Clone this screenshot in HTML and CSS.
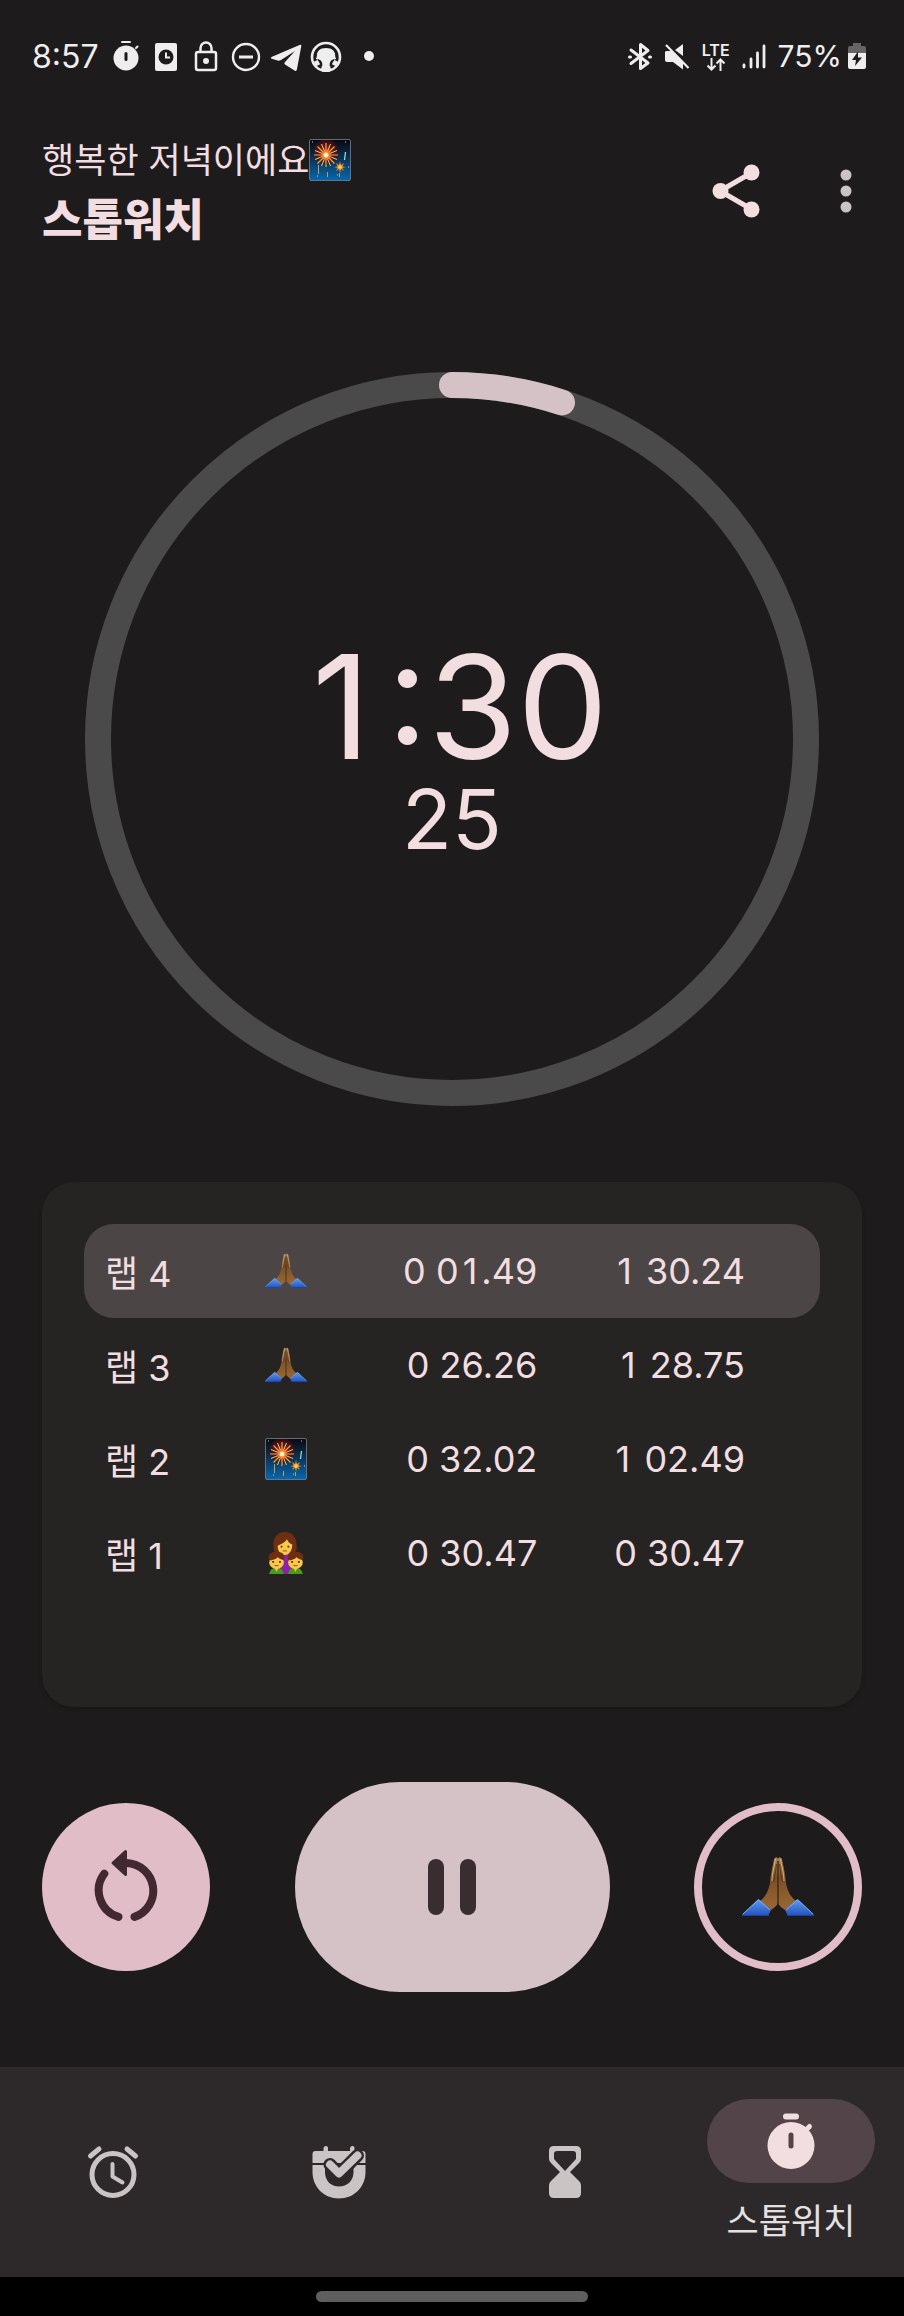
FILE: index.html
```html
<!DOCTYPE html>
<html lang="ko">
<head>
    <meta charset="UTF-8">
    <meta name="viewport" content="width=device-width, initial-scale=1.0">
    <title>스톱워치</title>
    <link rel="stylesheet" href="styles.css">
</head>
<body>
    <!-- shared drawings -->
    <svg class="sprite" aria-hidden="true">
        <defs>
            <linearGradient id="skin" x1="0" y1="0" x2="0" y2="1">
                <stop offset="0" stop-color="#a9835a"/>
                <stop offset="0.4" stop-color="#7b4f26"/>
                <stop offset="1" stop-color="#9a6837"/>
            </linearGradient>
            <linearGradient id="sleeve" x1="0" y1="0" x2="0" y2="1">
                <stop offset="0" stop-color="#5a9cf5"/>
                <stop offset="1" stop-color="#2450b8"/>
            </linearGradient>
            <linearGradient id="night" x1="0" y1="0" x2="0" y2="1">
                <stop offset="0" stop-color="#07080f"/>
                <stop offset="0.4" stop-color="#0d2c4c"/>
                <stop offset="1" stop-color="#0668b0"/>
            </linearGradient>
            <radialGradient id="glow">
                <stop offset="0" stop-color="#e2371c"/>
                <stop offset="0.5" stop-color="#7a1518" stop-opacity="0.8"/>
                <stop offset="1" stop-color="#4a0c14" stop-opacity="0.4"/>
            </radialGradient>
        </defs>

        <symbol id="pray" viewBox="0 0 72 60">
            <path fill="url(#skin)" d="M36 2C35 0 34 0 33 1C32 1 32 3 31.500 5C29.500 14 28.500 19 28 26C26 35 24 39 18 44L29 53C33 50 36 48 36 45Z"/>
            <path fill="url(#skin)" d="M36 2C37 0 38 0 39 1C40 1 40 3 40.500 5C42.500 14 43.500 19 44 26C46 35 48 39 54 44L43 53C39 50 36 48 36 45Z"/>
            <path d="M36 4V47" stroke="#33200f" stroke-width="1.200"/>
            <path d="M33.500 2C32 11 30 17 30 24M38.500 2C40 11 42 17 42 24" fill="none" stroke="#d9b98c" stroke-width="0.900"/>
            <path d="M34.500 7C33.500 15 33 19 31.500 25M37.500 7C38.500 15 39 19 40.500 25" fill="none" stroke="#4b2d12" stroke-width="0.800"/>
            <path fill="url(#sleeve)" d="M0 57.500L15.500 43Q16.500 42 17.500 43L29 53L26 59H0ZM72 57.500L56.500 43Q55.500 42 54.500 43L43 53L46 59H72Z"/>
            <path d="M0 58.500H27M45 58.500H72" stroke="#1c3f97" stroke-width="1.200"/>
            <path d="M1 57L16.500 42.500L28 53M71 57L55.500 42.500L44 53" fill="none" stroke="#8dbcff" stroke-width="0.800"/>
        </symbol>

        <symbol id="firework" viewBox="0 0 42 42">
            <rect x="0.500" y="0.500" width="41" height="41" rx="1.500" fill="url(#night)"/>
            <circle cx="17" cy="13" r="13" fill="url(#glow)"/>
            <g fill="none" stroke="#f3a52c" stroke-width="1.200">
                <path d="M17 4V28M5 16H29M8.500 7.500L25.500 24.500M25.500 7.500L8.500 24.500"/>
            </g>
            <g fill="none" stroke="#ffe06a" stroke-width="0.900">
                <path d="M12.500 5L21.500 27M21.500 5L12.500 27M6 11.500L28 20.500M6 20.500L28 11.500"/>
            </g>
            <circle cx="17" cy="16" r="4.500" fill="#ff7a2a"/>
            <circle cx="17" cy="16" r="2.500" fill="#fff4c8"/>
            <path d="M31 22L32 26L35 24L33.500 27.500L37 28L33.500 29L35 32L32 30L31 34L30 30L27 32L28.500 29L25 28L28.500 27.500L27 24L30 26Z" fill="#e68a1c"/>
            <circle cx="31" cy="28" r="1.800" fill="#ffd257"/>
            <path d="M35.500 21L36.500 13" stroke="#8fe6cf" stroke-width="1.300"/>
            <path d="M9.500 26V35M18.500 33V38M30.500 34V38" stroke="#c79a4c" stroke-width="1"/>
            <path d="M3 3h1M36 3h1M39 28h1M8 37h1M28 36h1" stroke="#b8d6e6" stroke-width="1"/>
            <rect x="0.500" y="0.500" width="41" height="41" rx="1.500" fill="none" stroke="#76828c" stroke-opacity="0.800"/>
        </symbol>

        <symbol id="family" viewBox="0 0 34 40">
            <path d="M16 0C8 0 5 6 5 13C5 18 7 21 10 22H23C26 21 28 17 27 12C27 5 23 0 16 0Z" fill="#6e2e10"/>
            <path d="M11 20H22L25 40H9Z" fill="#8c22a8"/>
            <path d="M9 13C12 12 16 10 18 7C19 10 21 11 23 12C23 18 20 22 16 22C12 22 9 18 9 13Z" fill="#f7c94b"/>
            <g id="child">
                <path d="M1 40Q2 34 8 34Q14 34 15 40Z" fill="#4a9a1e"/>
                <path d="M5.500 33H10.500L8 38Z" fill="#f0bd3e"/>
                <ellipse cx="8" cy="24" rx="7.500" ry="5.500" fill="#6e2e10"/>
                <ellipse cx="8" cy="29" rx="7" ry="6" fill="#f7c94b"/>
                <path d="M1 27Q2 21 8 22Q14 21 15 27Q11 26 9 24Q6 27 1 27Z" fill="#6e2e10"/>
                <path d="M4 28.500h1.600M10.400 28.500h1.600" stroke="#452308" stroke-width="1.600"/>
                <path d="M6 32h4" stroke="#b3541c" stroke-width="1"/>
            </g>
            <use href="#child" x="18"/>
            <path d="M12 14h1.500M18.500 14h1.500" stroke="#452308" stroke-width="1.600"/>
            <path d="M14 18h4" stroke="#b3541c" stroke-width="1"/>
        </symbol>
    </svg>

    <div class="status-bar">
        <span class="clock">8:57</span>
        <div class="status-icons">
            <svg viewBox="0 0 32 32">
                <path d="M12 2h8M26 8l1.500-1.500" stroke="#eee" stroke-width="2" stroke-linecap="round"/>
                <circle cx="16" cy="18" r="12.500" fill="#eee"/>
                <path d="M16 13.500v6" stroke="#1e1b1c" stroke-width="3" stroke-linecap="round"/>
            </svg>
            <svg viewBox="0 0 32 32">
                <rect x="5" y="3" width="22" height="28" rx="2" fill="#eee"/>
                <circle cx="16" cy="17" r="7.500" fill="#1e1b1c"/>
                <path d="M16 12.500v5h4" fill="none" stroke="#eee" stroke-width="2"/>
            </svg>
            <svg viewBox="0 0 32 32" fill="none" stroke="#eee" stroke-width="2.500">
                <rect x="6" y="12" width="20" height="18" rx="2"/>
                <path d="M10.500 12V8a5.500 5.500 0 0 1 11 0v4"/>
                <circle cx="16" cy="21" r="3" fill="#eee" stroke="none"/>
            </svg>
            <svg viewBox="0 0 32 32" fill="none" stroke="#eee" stroke-width="2.400">
                <circle cx="16" cy="17" r="13"/>
                <path d="M9 17h14" stroke-width="3"/>
            </svg>
            <svg viewBox="0 0 32 32">
                <path d="M1 18.500Q0 18 2 16.800L29.500 5Q31.500 4 31.300 6L27 29Q26.500 32 24.500 30.500L15 24.500Q13.500 23.500 15 22L25 11L11 20Q9 21 7.500 20.500Z" fill="#eee"/>
            </svg>
            <svg viewBox="0 0 32 32">
                <circle cx="16" cy="17" r="14" fill="none" stroke="#eee" stroke-width="2.600"/>
                <path d="M6 19Q5 8 16 8T26 19Q20 20 20 25Q20 28 22 30Q16 32.500 10 30Q12 28 12 25Q12 20 6 19Z" fill="#eee"/>
                <path d="M5 24L9 22M27 24L23 22" stroke="#eee" stroke-width="5"/>
                <path d="M6 18Q6 7 16 7T26 18" fill="none" stroke="#1e1b1c" stroke-width="1"/>
                <path d="M8 20Q12 21 11.500 26M24 20Q20 21 20.500 26" fill="none" stroke="#1e1b1c" stroke-width="1.600"/>
            </svg>
            <span class="more-dot"></span>
        </div>
        <div class="system-icons">
            <svg width="24" height="32" viewBox="0 0 24 32" fill="none" stroke="#eee" stroke-width="3" stroke-linejoin="round" stroke-linecap="round">
                <path d="M3 10L20 23L12.500 28.500V4.500L20 10.500L3 23.500"/>
                <path d="M1.500 17h1M21.500 17h1"/>
            </svg>
            <svg width="26" height="32" viewBox="0 0 26 32" fill="#eee">
                <path d="M1 12Q1 11 3 11H8L19 22V29.500L9 22H3Q1 22 1 20ZM11 10L19 4V16Z"/>
                <path d="M2 5L24.500 28" stroke="#eee" stroke-width="2.200"/>
            </svg>
            <div class="network">
                <span>LTE</span>
                <svg width="20" height="13" viewBox="0 0 20 13" fill="none" stroke="#eee" stroke-width="2">
                    <path d="M5.500 0v11M1.500 7.500l4 4l4-4M14.500 13V2M10.500 5.500l4-4l4 4"/>
                </svg>
            </div>
            <svg width="24" height="32" viewBox="0 0 24 32" stroke="#eee" stroke-width="2.800" stroke-linecap="round">
                <path d="M2 25v2M9 19v8M15.500 13v14M22 6v21"/>
            </svg>
            <span class="battery-level">75%</span>
            <svg width="18" height="32" viewBox="0 0 18 32">
                <path d="M5 3h8v3h3q2 0 2 2v6H0V8q0-2 2-2h3z" fill="#676465"/>
                <path d="M0 13h18v14q0 2-2 2H2q-2 0-2-2z" fill="#eee"/>
                <path d="M10 11.500L4 20h4l-1 6l7-8.500h-4z" fill="#1e1b1c"/>
            </svg>
        </div>
    </div>

    <header class="header">
        <div class="header-text">
            <p class="greeting">행복한 저녁이에요<svg class="emoji" viewBox="0 0 42 42" role="img" aria-label="불꽃놀이"><use href="#firework"/></svg></p>
            <h1>스톱워치</h1>
        </div>
        <div class="header-actions">
            <button class="icon-btn" type="button" aria-label="공유">
                <svg width="48" height="54" viewBox="0 0 48 54" fill="#f2dde1">
                    <path d="M40 8.500L8 27l32 18.500" fill="none" stroke="#f2dde1" stroke-width="5"/>
                    <circle cx="8.500" cy="27" r="8"/>
                    <circle cx="39.500" cy="8.500" r="8"/>
                    <circle cx="39.500" cy="45.500" r="8"/>
                </svg>
            </button>
            <button class="icon-btn" type="button" aria-label="더보기">
                <svg width="12" height="44" viewBox="0 0 12 44" fill="#cbc4c4">
                    <circle cx="6" cy="6" r="5.500"/>
                    <circle cx="6" cy="22" r="5.500"/>
                    <circle cx="6" cy="38" r="5.500"/>
                </svg>
            </button>
        </div>
    </header>

    <main class="main">
        <div class="dial">
            <svg class="dial-ring" viewBox="0 0 734 734" fill="none" stroke-width="26">
                <circle cx="367" cy="367" r="354" stroke="#4a4a4a"/>
                <path d="M367 13A354 354 0 0 1 477 30.500" stroke="#d5c2c6" stroke-linecap="round"/>
            </svg>
            <div class="readout">
                <div class="readout-main"><span class="one">1</span>:30</div>
                <div class="readout-sub">25</div>
            </div>
        </div>

        <section class="laps">
            <table>
                <tr class="current">
                    <td>랩 4</td>
                    <td><svg class="emoji pray" role="img" aria-label="기도"><use href="#pray"/></svg></td>
                    <td>0 0<span class="one">1</span>.49</td>
                    <td><span class="one">1</span> 30.24</td>
                </tr>
                <tr>
                    <td>랩 3</td>
                    <td><svg class="emoji pray" role="img" aria-label="기도"><use href="#pray"/></svg></td>
                    <td>0 26.26</td>
                    <td><span class="one">1</span> 28.75</td>
                </tr>
                <tr>
                    <td>랩 2</td>
                    <td><svg class="emoji" role="img" aria-label="불꽃놀이"><use href="#firework"/></svg></td>
                    <td>0 32.02</td>
                    <td><span class="one">1</span> 02.49</td>
                </tr>
                <tr>
                    <td>랩 1</td>
                    <td><svg class="emoji" role="img" aria-label="가족"><use href="#family"/></svg></td>
                    <td>0 30.47</td>
                    <td>0 30.47</td>
                </tr>
            </table>
        </section>

        <div class="controls">
            <button class="round-btn reset" type="button" aria-label="초기화">
                <svg width="64" height="76" viewBox="0 0 64 76" fill="none" stroke="#412831" stroke-width="8" stroke-linecap="round">
                    <path d="M32.500 14A27.700 27.700 0 0 1 40.500 67.900"/>
                    <path d="M10.300 24.700A27.700 27.700 0 0 0 24.500 67.900"/>
                    <path d="M31.500 2.500L19 14L31.500 25.500Z" fill="#412831" stroke-width="3" stroke-linejoin="round"/>
                </svg>
            </button>
            <button class="pause" type="button" aria-label="일시정지">
                <span></span>
                <span></span>
            </button>
            <button class="round-btn lap" type="button" aria-label="랩">
                <svg width="72" height="60"><use href="#pray"/></svg>
            </button>
        </div>
    </main>

    <nav class="bottom-nav">
        <a href="#" aria-label="알람">
            <svg width="54" height="54" viewBox="0 0 54 54" fill="none" stroke="#cbc4c4" stroke-linecap="round">
                <circle cx="27" cy="29.500" r="21" stroke-width="5"/>
                <path d="M26.500 19V31.500L36.500 37.500" stroke-width="4" stroke-linejoin="round"/>
                <path d="M4.500 11L13 4M49.500 11L41 4" stroke-width="5"/>
            </svg>
        </a>
        <a href="#" aria-label="루틴">
            <svg width="54" height="54" viewBox="0 0 54 54">
                <path fill="#cbc4c4" d="M0.500 18V9Q0.500 6 3.500 6H11.500V3Q12 1 14 1T16 3V6H38V3Q38.500 1 40.500 1T42.500 3V6H50.500Q53.500 6 53.500 9V18ZM0.500 20H53.500V27C53.500 42 42 53.500 27 53.500S0.500 42 0.500 27Z"/>
                <path fill="#2d292a" d="M13 20V27C13 36 19 41.500 27 41.500S41.500 36 41.500 27V20Z"/>
                <path d="M18 19.500L27 29L45.500 10.500" fill="none" stroke="#2d292a" stroke-width="13" stroke-linecap="round" stroke-linejoin="round"/>
                <path d="M18 19.500L27 28.500L45.500 10.500" fill="none" stroke="#cbc4c4" stroke-width="8" stroke-linecap="round" stroke-linejoin="round"/>
            </svg>
        </a>
        <a href="#" aria-label="타이머">
            <svg width="34" height="54" viewBox="0 0 34 54" fill="#cbc4c4">
                <path fill-rule="evenodd" d="M6 1H28Q33 1 33 6V14Q33 16 31 18L22 27L31 36Q33 38 33 40V48Q33 53 28 53H6Q1 53 1 48V40Q1 38 3 36L12 27L3 18Q1 16 1 14V6Q1 1 6 1ZM9 6Q6 6 6 9V14L17 26L28 14V9Q28 6 25 6Z"/>
            </svg>
        </a>
        <a href="#" class="active">
            <span class="nav-pill">
                <svg width="48" height="58" viewBox="0 0 48 58" fill="none" stroke-linecap="round">
                    <path d="M19 4.500H29" stroke="#f2dde1" stroke-width="6"/>
                    <path d="M39 18L42.500 14.500" stroke="#f2dde1" stroke-width="5"/>
                    <circle cx="24" cy="33.500" r="23.500" fill="#f2dde1"/>
                    <path d="M24 23V34" stroke="#524448" stroke-width="5"/>
                </svg>
            </span>
            <span class="nav-label">스톱워치</span>
        </a>
    </nav>
    <div class="gesture-bar"><span></span></div>
</body>
</html>
```
FILE: styles.css
```css
* {
    margin: 0;
    padding: 0;
    box-sizing: border-box;
}

body {
    display: flex;
    flex-direction: column;
    min-height: 100vh;
    background: #1e1b1c;
    color: #f2dde1;
    font-family: Inter, 'Noto Sans CJK KR', sans-serif;
}

button {
    border: none;
    background: none;
    cursor: pointer;
}

svg {
    flex-shrink: 0;
}

.sprite {
    position: absolute;
    width: 0;
    height: 0;
}

/* keeps the narrow "1" as wide as the other digits */
.one {
    display: inline-block;
    width: 1ch;
    text-align: center;
}

/* status bar */
.status-bar {
    display: flex;
    align-items: center;
    height: 112px;
    padding: 0 38px 0 32px;
    color: #eee;
    font-size: 32px;
}

.clock {
    min-width: 78px;
}

.status-icons {
    display: flex;
    align-items: center;
    gap: 8px;
}

.status-icons svg {
    width: 32px;
    height: 32px;
}

.more-dot {
    width: 10px;
    height: 10px;
    margin-left: 14px;
    border-radius: 50%;
    background: #eee;
}

.system-icons {
    display: flex;
    align-items: center;
    gap: 12px;
    margin-left: auto;
}

.network {
    display: flex;
    flex-direction: column;
    align-items: center;
    font-size: 16px;
    font-weight: 600;
    line-height: 16px;
}

.battery-level {
    margin-right: -6px;
    font-size: 30px;
}

/* header */
.header {
    display: flex;
    align-items: flex-start;
    justify-content: space-between;
    padding: 24px 52px 0 42px;
}

.greeting {
    display: flex;
    align-items: center;
    font-size: 35px;
    line-height: 48px;
}

.header h1 {
    font-size: 44px;
    font-weight: 900;
    line-height: 72px;
}

.header-actions {
    display: flex;
    align-items: center;
    gap: 80px;
    margin-top: 28px;
}

.icon-btn {
    display: flex;
}

.emoji {
    width: 42px;
    height: 42px;
}

/* dial */
.main {
    display: flex;
    flex-direction: column;
    padding: 116px 42px 0;
}

.dial {
    display: grid;
    margin: 0 43px;
}

.dial-ring,
.readout {
    grid-area: 1 / 1;
}

.dial-ring {
    display: block;
    width: 100%;
}

.readout {
    display: flex;
    flex-direction: column;
    align-items: center;
    justify-content: center;
    padding-top: 18px;
}

.readout-main {
    font-size: 144px;
    line-height: 144px;
}

.readout-sub {
    font-size: 82px;
    line-height: 82px;
}

/* laps */
.laps {
    min-height: 525px;
    margin-top: 76px;
    padding: 42px;
    border-radius: 32px;
    background: #252422;
    box-shadow: 0 2px 4px rgba(0, 0, 0, 0.2);
}

.laps table {
    width: 100%;
    table-layout: fixed;
    border-spacing: 0;
    font-size: 36px;
}

.laps td {
    height: 94px;
    white-space: nowrap;
}

.laps td:nth-child(1) {
    width: 20%;
    padding-left: 21px;
}

.laps td:nth-child(2) {
    width: 15%;
    text-align: center;
}

.laps td:nth-child(3) {
    width: 27%;
    padding-right: 3px;
    text-align: right;
}

.laps td:nth-child(4) {
    padding-right: 75px;
    text-align: right;
}

.laps .emoji {
    display: block;
    margin: 0 auto;
}

.laps .pray {
    height: 36px;
}

.current td {
    background: #4b4645;
}

.current td:first-child {
    border-radius: 30px 0 0 30px;
}

.current td:last-child {
    border-radius: 0 30px 30px 0;
}

/* controls */
.controls {
    display: flex;
    align-items: center;
    justify-content: space-between;
    margin-top: 75px;
}

.round-btn {
    display: flex;
    align-items: center;
    justify-content: center;
    width: 168px;
    height: 168px;
    border-radius: 50%;
}

.reset {
    background: #e1bdc7;
}

.lap {
    border: 8px solid #e1bdc7;
}

.pause {
    display: flex;
    align-items: center;
    justify-content: center;
    gap: 16px;
    width: 315px;
    height: 210px;
    border-radius: 105px;
    background: #d5c2c6;
}

.pause span {
    width: 16px;
    height: 56px;
    border-radius: 8px;
    background: #3a2d31;
}

/* bottom navigation */
.bottom-nav {
    display: grid;
    grid-template-columns: repeat(4, 1fr);
    height: 210px;
    margin-top: auto;
    background: #2d292a;
}

.bottom-nav a {
    display: flex;
    flex-direction: column;
    align-items: center;
    justify-content: center;
    color: #e6e1e1;
    text-decoration: none;
}

.nav-pill {
    display: flex;
    align-items: center;
    justify-content: center;
    width: 168px;
    height: 84px;
    border-radius: 42px;
    background: #524448;
}

.nav-label {
    margin-top: 14px;
    font-size: 35px;
    line-height: 48px;
}

.gesture-bar {
    display: flex;
    align-items: center;
    justify-content: center;
    height: 39px;
    background: #000;
}

.gesture-bar span {
    width: 30%;
    height: 11px;
    border-radius: 6px;
    background: #5e5e5e;
}
```
